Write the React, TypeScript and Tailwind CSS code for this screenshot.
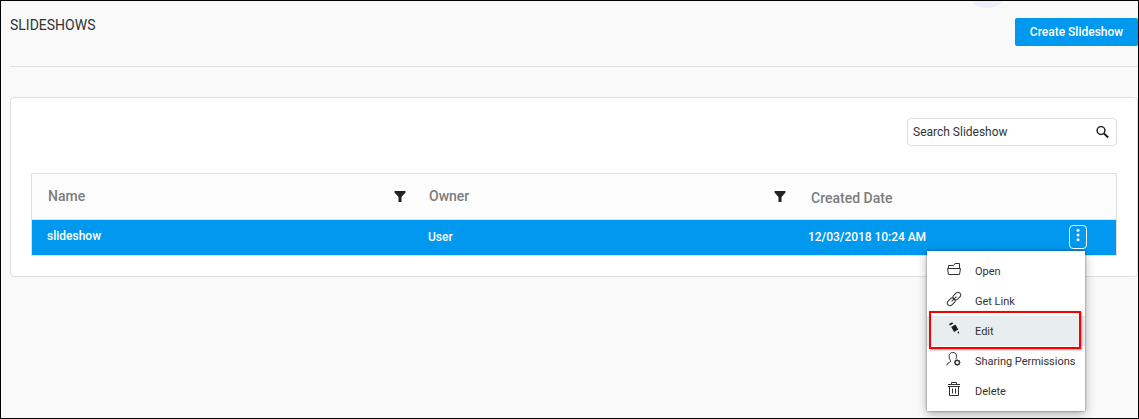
import React from "react";

const menu = [
  { label: "Open", icon: <OpenIcon /> },
  { label: "Get Link", icon: <LinkIcon /> },
  { label: "Edit", icon: <EditIcon />, active: true },
  { label: "Sharing Permissions", icon: <ShareIcon /> },
  { label: "Delete", icon: <TrashIcon /> },
];

const iconProps = {
  width: 16,
  height: 16,
  viewBox: "0 0 16 16",
  fill: "none",
  stroke: "#333",
  strokeWidth: 1,
};

function OpenIcon() {
  return (
    <svg {...iconProps}>
      <path d="M2.500 7V4.500h5l1.500-2h4.500V7M1.500 7.500h13l-1 6h-11z" />
    </svg>
  );
}

function LinkIcon() {
  return (
    <svg {...iconProps}>
      <g transform="rotate(-45 8 8)">
        <rect x="-0.300" y="5.300" width="8.600" height="5.400" rx="2.700" />
        <rect x="7.700" y="5.300" width="8.600" height="5.400" rx="2.700" />
        <path d="M4.500 8h7" />
      </g>
    </svg>
  );
}

function EditIcon() {
  return (
    <svg {...iconProps} fill="#1c1c1c" stroke="none">
      <path d="M3 3.100L6.300 1.200l.9 1.500L3.900 4.600zM5.200 5.900l4.200-2.400 2.900 5-4.200 2.400zM11.200 11.200l1.700-1 .3 2.900z" />
    </svg>
  );
}

function ShareIcon() {
  return (
    <svg {...iconProps}>
      <path d="M1 14.500c.3-2.300 1.500-3 3.500-3.700V9.300C2.500 7.500 2.300 1.500 6.700 1.500S11 6 9.700 8.200" />
      <circle cx="11.200" cy="11.500" r="2.200" strokeWidth="1.300" />
      <path d="M11.200 8.200v1M11.200 13.800v1M7.900 11.500h1M13.500 11.500h1M8.900 9.200l.7.700M12.800 13.100l.7.700M13.500 9.200l-.7.700M9.600 13.100l-.7.700" />
    </svg>
  );
}

function TrashIcon() {
  return (
    <svg {...iconProps}>
      <path d="M2 3.500h12M5.500 3.500v-2h5v2M3.500 5.500v9h9v-9M2 5.500h12M6.500 7.500v5M9.500 7.500v5" />
    </svg>
  );
}

function Funnel() {
  return (
    <svg width="12" height="12" viewBox="0 0 12 12" fill="#222">
      <path d="M.5 0h11v1.500L7.500 6v5H4.500V6L.5 1.500z" />
    </svg>
  );
}

export default function App() {
  return (
    <div className="relative h-[419px] w-[1139px] overflow-hidden border border-black bg-[#f9f9f9] pl-[9px] font-['Roboto',sans-serif] text-[#333]">
      <div className="absolute -top-[31px] left-[966px] h-[38px] w-[40px] rounded-full bg-[#eaeff8]" />
      <header className="flex h-[66px] items-start justify-between border-b border-[#dfe0e2]">
        <h1 className="pt-[14px] text-[14px] leading-5">SLIDESHOWS</h1>
        <button className="mt-[17px] h-7 w-[123px] rounded-[2px] bg-[#0099ef] text-[12px] font-medium leading-7 text-white">
          Create Slideshow
        </button>
      </header>

      <main className="mt-[30px] h-[180px] rounded-[4px] border border-[#dfe0e2] bg-white pl-5 pr-[20px] pt-5">
        <div className="ml-auto flex h-7 w-[210px] items-center justify-between rounded-[4px] border border-[#dfe0e2] pl-[5px] pr-[7px] text-[12px]">
          <span>Search Slideshow</span>
          <svg width="13" height="13" viewBox="0 0 13 13" fill="none" stroke="#222">
            <circle cx="5" cy="4.500" r="3.900" strokeWidth="1.500" />
            <path d="M8 7.500l4.200 4" strokeWidth="2" />
          </svg>
        </div>
        <div className="mt-[27px] w-[1086px] border border-[#dfe0e2]">
          <div className="flex h-[46px] items-center border-b border-[#dfe0e2] bg-[#fcfcfc] text-[14px] font-medium text-[#7d7d7d]">
            <div className="flex w-[381px] items-center justify-between pl-4 pr-[7px]">
              <span>Name</span>
              <Funnel />
            </div>
            <div className="flex w-[381px] items-center justify-between pl-4 pr-2">
              <span>Owner</span>
              <Funnel />
            </div>
            <span className="pl-[17px] pt-[3px]">Created Date</span>
          </div>
          <div className="flex h-[35px] items-center bg-[#0099ef] text-[12px] font-medium text-white">
            <span className="w-[381px] pb-[4px] pl-[15px]">slideshow</span>
            <span className="w-[380px] pb-[2px] pl-[15px]">User</span>
            <span className="w-[276px] pb-[2px] pl-[15px] tracking-[-0.04px]">12/03/2018 10:24 AM</span>
            <span className="mb-[2px] flex h-6 w-[18px] items-center justify-center rounded-[4px] border border-white pb-[3px]">
              <svg width="4" height="14" viewBox="0 0 4 14" fill="white">
                <circle cx="2" cy="2.200" r="1.500" />
                <circle cx="2" cy="7" r="1.500" />
                <circle cx="2" cy="11.800" r="1.500" />
              </svg>
            </span>
          </div>
        </div>
      </main>

      <nav className="absolute left-[926px] top-[250px] h-[160px] w-[158px] bg-white pt-[5px] text-[11px] shadow-[0_3px_10px_rgba(0,0,0,0.3),0_0_2px_rgba(0,0,0,0.5)]">
        {menu.map(({ label, icon, active }) => (
          <div
            key={label}
            className={active ? "flex h-[30px] items-center bg-[#e8edf0] pl-[19px]" : "flex h-[30px] items-center pl-[19px]"}
          >
            <span className="mb-1 w-[29px]">{icon}</span>
            <span className="whitespace-nowrap pt-[2px] tracking-[-0.02px]">{label}</span>
          </div>
        ))}
        <div className="absolute left-[2px] top-[60px] h-[38px] w-[152px] border-2 border-[#f60000] shadow-[1px_1px_2px_rgba(0,0,0,0.35)]" />
      </nav>
    </div>
  );
}
